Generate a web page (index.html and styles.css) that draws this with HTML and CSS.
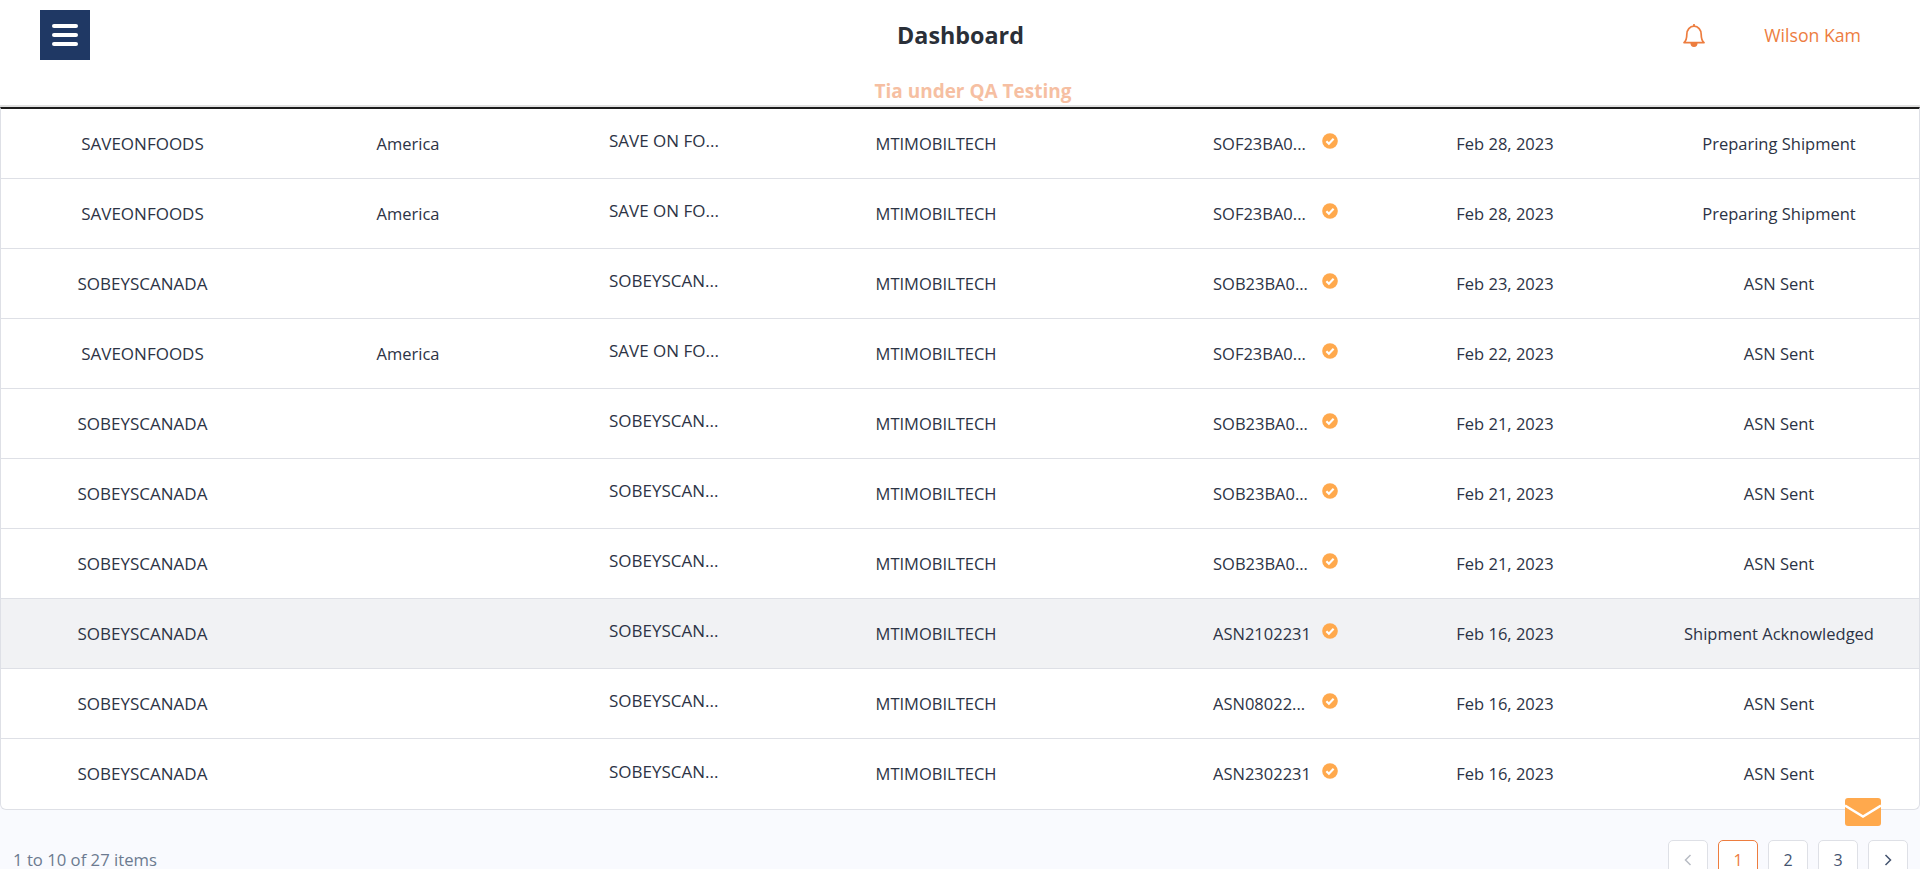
FILE: index.html
```html
<!doctype html>
<html lang="en">
  <head>
    <title>Dashboard</title>
    <meta charset="utf-8" />
    <link rel="stylesheet" href="styles.css">
  </head>

  <body>
    <svg class="icon-defs" width="0" height="0">
      <symbol id="verified" viewBox="0 0 16 16">
        <circle cx="8" cy="8" r="7.8" fill="#ffa94d" />
        <path d="M4.4 8.200l2.500 2.500 4.700-4.900" fill="none" stroke="#fff" stroke-width="2.200" />
      </symbol>
    </svg>

    <header class="topbar">
      <div class="topbar-main">
        <button class="menu-button" aria-label="Menu">
          <span></span>
          <span></span>
          <span></span>
        </button>
        <h1>Dashboard</h1>
        <div class="user-area">
          <svg class="bell" viewBox="0 0 22 24" fill="none" stroke="#ed7d3f" stroke-width="1.7" stroke-linejoin="round">
            <path d="M11 1v2.200" />
            <path d="M1 19.600c2.200-2 2.800-4.400 2.800-8.200 0-4.600 3-8.200 7.200-8.200s7.200 3.600 7.200 8.200c0 3.800 .6 6.200 2.800 8.200z" />
            <path d="M8.300 20c0 4.200 5.400 4.200 5.400 0z" fill="#ed7d3f" />
          </svg>
          <span class="user-name">Wilson Kam</span>
        </div>
      </div>
      <p class="notice">Tia under QA Testing</p>
    </header>

    <main class="table-card">
      <table class="orders">
        <colgroup>
          <col class="col-retailer" />
          <col class="col-region" />
          <col class="col-customer" />
          <col class="col-vendor" />
          <col class="col-asn" />
          <col class="col-date" />
          <col class="col-status" />
        </colgroup>
        <tbody>
          <tr>
            <td>SAVEONFOODS</td>
            <td>America</td>
            <td class="cell-left"><span class="raised">SAVE ON FO...</span></td>
            <td>MTIMOBILTECH</td>
            <td class="cell-left"><span class="asn"><span class="asn-no">SOF23BA0...</span><svg class="check"><use href="#verified" /></svg></span></td>
            <td>Feb 28, 2023</td>
            <td>Preparing Shipment</td>
          </tr>
          <tr>
            <td>SAVEONFOODS</td>
            <td>America</td>
            <td class="cell-left"><span class="raised">SAVE ON FO...</span></td>
            <td>MTIMOBILTECH</td>
            <td class="cell-left"><span class="asn"><span class="asn-no">SOF23BA0...</span><svg class="check"><use href="#verified" /></svg></span></td>
            <td>Feb 28, 2023</td>
            <td>Preparing Shipment</td>
          </tr>
          <tr>
            <td>SOBEYSCANADA</td>
            <td></td>
            <td class="cell-left"><span class="raised">SOBEYSCAN...</span></td>
            <td>MTIMOBILTECH</td>
            <td class="cell-left"><span class="asn"><span class="asn-no">SOB23BA0...</span><svg class="check"><use href="#verified" /></svg></span></td>
            <td>Feb 23, 2023</td>
            <td>ASN Sent</td>
          </tr>
          <tr>
            <td>SAVEONFOODS</td>
            <td>America</td>
            <td class="cell-left"><span class="raised">SAVE ON FO...</span></td>
            <td>MTIMOBILTECH</td>
            <td class="cell-left"><span class="asn"><span class="asn-no">SOF23BA0...</span><svg class="check"><use href="#verified" /></svg></span></td>
            <td>Feb 22, 2023</td>
            <td>ASN Sent</td>
          </tr>
          <tr>
            <td>SOBEYSCANADA</td>
            <td></td>
            <td class="cell-left"><span class="raised">SOBEYSCAN...</span></td>
            <td>MTIMOBILTECH</td>
            <td class="cell-left"><span class="asn"><span class="asn-no">SOB23BA0...</span><svg class="check"><use href="#verified" /></svg></span></td>
            <td>Feb 21, 2023</td>
            <td>ASN Sent</td>
          </tr>
          <tr>
            <td>SOBEYSCANADA</td>
            <td></td>
            <td class="cell-left"><span class="raised">SOBEYSCAN...</span></td>
            <td>MTIMOBILTECH</td>
            <td class="cell-left"><span class="asn"><span class="asn-no">SOB23BA0...</span><svg class="check"><use href="#verified" /></svg></span></td>
            <td>Feb 21, 2023</td>
            <td>ASN Sent</td>
          </tr>
          <tr>
            <td>SOBEYSCANADA</td>
            <td></td>
            <td class="cell-left"><span class="raised">SOBEYSCAN...</span></td>
            <td>MTIMOBILTECH</td>
            <td class="cell-left"><span class="asn"><span class="asn-no">SOB23BA0...</span><svg class="check"><use href="#verified" /></svg></span></td>
            <td>Feb 21, 2023</td>
            <td>ASN Sent</td>
          </tr>
          <tr class="row-hover">
            <td>SOBEYSCANADA</td>
            <td></td>
            <td class="cell-left"><span class="raised">SOBEYSCAN...</span></td>
            <td>MTIMOBILTECH</td>
            <td class="cell-left"><span class="asn"><span class="asn-no">ASN2102231</span><svg class="check"><use href="#verified" /></svg></span></td>
            <td>Feb 16, 2023</td>
            <td>Shipment Acknowledged</td>
          </tr>
          <tr>
            <td>SOBEYSCANADA</td>
            <td></td>
            <td class="cell-left"><span class="raised">SOBEYSCAN...</span></td>
            <td>MTIMOBILTECH</td>
            <td class="cell-left"><span class="asn"><span class="asn-no">ASN08022...</span><svg class="check"><use href="#verified" /></svg></span></td>
            <td>Feb 16, 2023</td>
            <td>ASN Sent</td>
          </tr>
          <tr>
            <td>SOBEYSCANADA</td>
            <td></td>
            <td class="cell-left"><span class="raised">SOBEYSCAN...</span></td>
            <td>MTIMOBILTECH</td>
            <td class="cell-left"><span class="asn"><span class="asn-no">ASN2302231</span><svg class="check"><use href="#verified" /></svg></span></td>
            <td>Feb 16, 2023</td>
            <td>ASN Sent</td>
          </tr>
        </tbody>
      </table>
    </main>

    <footer class="table-footer">
      <span class="item-count">1 to 10 of 27 items</span>
      <nav class="pagination">
        <button class="page-button disabled">
          <svg viewBox="0 0 10 14"><path d="M7.500 2L2.500 7l5 5" /></svg>
        </button>
        <button class="page-button active">1</button>
        <button class="page-button">2</button>
        <button class="page-button">3</button>
        <button class="page-button">
          <svg viewBox="0 0 10 14"><path d="M2.500 2l5 5-5 5" /></svg>
        </button>
      </nav>
    </footer>

    <button class="mail-button" aria-label="Messages">
      <svg viewBox="0 0 36 28">
        <rect width="36" height="28" rx="3" fill="#ffa94d" />
        <path d="M0 7.500l18 11 18-11" fill="none" stroke="#fff" stroke-width="2.400" />
      </svg>
    </button>
  </body>
</html>
```

FILE: styles.css
```css
html,
body {
  height: 100%;
  overflow: hidden;
}

body {
  margin: 0;
  background-color: #f9fafe;
  color: #2c3345;
  font-family: "Open Sans", "Noto Sans", sans-serif;
  font-size: 16.5px;
  position: relative;
}

.icon-defs {
  display: block;
  height: 0;
}

.topbar {
  height: 105px;
  background-color: #fff;
  border-bottom: 2px solid #e0e0e0;
}

.topbar-main {
  display: grid;
  grid-template-columns: 1fr auto 1fr;
  align-items: center;
  height: 70px;
  padding-left: 40px;
  padding-right: 59px;
}

.menu-button {
  display: flex;
  flex-direction: column;
  justify-content: center;
  gap: 5px;
  width: 50px;
  height: 50px;
  padding: 0 12px;
  border: 0;
  background-color: #1f3864;
}

.menu-button span {
  height: 4px;
  border-radius: 2px;
  background-color: #fff;
}

.topbar h1 {
  margin: 0 0 0 20px;
  font-size: 23.3px;
  font-weight: 700;
  color: #2a2f38;
}

.user-area {
  display: flex;
  justify-content: flex-end;
  align-items: center;
  gap: 59px;
}

.bell {
  width: 22px;
  height: 24px;
}

.user-name {
  color: #ed7d3f;
  font-size: 17.7px;
}

.notice {
  margin: 12px 0 0;
  padding-left: 26px;
  text-align: center;
  font-size: 19px;
  font-weight: 700;
  line-height: 19px;
  color: #f6bfa2;
}

.table-card {
  border: 1px solid #dee0e6;
  border-top: 2px solid #1c1c1c;
  border-radius: 0 0 6px 6px;
  background-color: #fff;
  overflow: hidden;
}

.orders {
  width: 100%;
  border-collapse: collapse;
  table-layout: fixed;
}

.col-retailer {
  width: 283px;
}

.col-region {
  width: 248px;
}

.col-customer {
  width: 269px;
}

.col-vendor {
  width: 270px;
}

.col-asn {
  width: 300px;
}

.col-date {
  width: 268px;
}

.orders td {
  height: 68px;
  padding: 0 0 1px;
  text-align: center;
  border-bottom: 1px solid #dee0e6;
  white-space: nowrap;
}

.orders .cell-left {
  text-align: left;
}

.orders tr:last-child td {
  border-bottom: 0;
  height: 69px;
}

.orders td:nth-child(1) {
  font-size: 17px;
}

.orders td:nth-child(3) {
  padding-left: 77px;
  font-size: 17px;
}

.orders td:nth-child(5) {
  padding-left: 142px;
}

.raised {
  display: inline-block;
  margin-bottom: 5px;
}

.asn {
  display: inline-flex;
  align-items: center;
}

.asn-no {
  display: inline-block;
  width: 109px;
}

.check {
  width: 16px;
  height: 16px;
  margin-bottom: 5px;
}

.row-hover td {
  background-color: #f1f2f4;
}

.table-footer {
  display: flex;
  justify-content: space-between;
  align-items: flex-start;
  padding: 30px 12px 0 13px;
}

.item-count {
  margin-top: 8px;
  color: #6c7a90;
  font-size: 16.7px;
}

.pagination {
  display: flex;
  gap: 10px;
}

.page-button {
  display: flex;
  justify-content: center;
  align-items: center;
  width: 40px;
  height: 40px;
  padding: 0;
  border: 1px solid #dee0e6;
  border-radius: 5px;
  background-color: #fff;
  color: #44546f;
  font-family: inherit;
  font-size: 16px;
}

.page-button svg {
  width: 10px;
  height: 14px;
  fill: none;
  stroke: #44546f;
  stroke-width: 1.5;
}

.page-button.disabled svg {
  stroke: #b8bcc4;
}

.page-button.active {
  border-color: #ed7d3f;
  color: #ed7d3f;
}

.mail-button {
  position: absolute;
  left: 1845px;
  top: 798px;
  width: 36px;
  height: 28px;
  padding: 0;
  border: 0;
  background: none;
}

.mail-button svg {
  display: block;
  width: 36px;
  height: 28px;
}
```
